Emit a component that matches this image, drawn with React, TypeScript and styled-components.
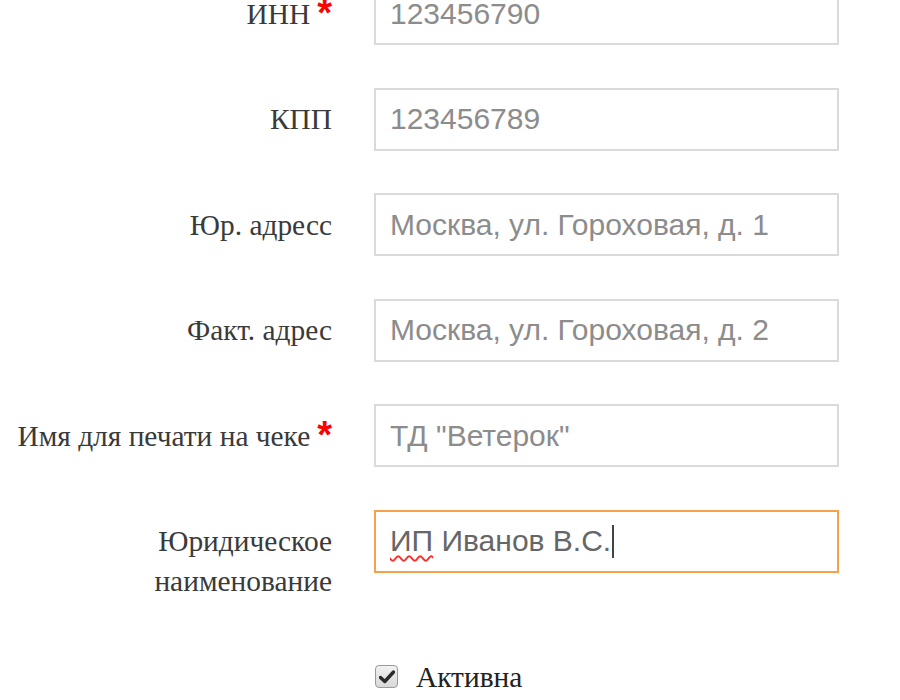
import React from "react";
import styled, { createGlobalStyle } from "styled-components";

type Row = {
    label: string;
    value: string;
    required?: boolean;
};

const rows: Row[] = [
    { label: "ИНН", value: "123456790", required: true },
    { label: "КПП", value: "123456789" },
    { label: "Юр. адресс", value: "Москва, ул. Гороховая, д. 1" },
    { label: "Факт. адрес", value: "Москва, ул. Гороховая, д. 2" },
    { label: "Имя для печати на чеке", value: "ТД \"Ветерок\"", required: true },
];

function App() {
    return (
        <>
            <GlobalStyle />
            <Form>
                {rows.map((row) => (
                    <FormRow key={row.label}>
                        <Label>
                            {row.label}
                            {row.required && <Required>*</Required>}
                        </Label>
                        <Field>
                            <FieldText>{row.value}</FieldText>
                        </Field>
                    </FormRow>
                ))}
                <FormRow>
                    <Label>
                        Юридическое
                        <br />
                        наименование
                    </Label>
                    <Field $focused>
                        <FieldText $filled>
                            <Misspelled>ИП</Misspelled> Иванов В.С.
                        </FieldText>
                        <Caret />
                    </Field>
                </FormRow>
                <CheckRow>
                    <CheckBox>
                        <svg width="16" height="14" viewBox="0 0 16 14">
                            <path d="M1.5 7.5 L5.8 11.5 L14.5 2" fill="none" stroke="#2b2b2b" strokeWidth="3.4" strokeLinecap="round" strokeLinejoin="round" />
                        </svg>
                    </CheckBox>
                    <CheckLabel>Активна</CheckLabel>
                </CheckRow>
            </Form>
        </>
    );
}

const GlobalStyle = createGlobalStyle`
    html, body {
        margin: 0;
        padding: 0;
        background: #ffffff;
        overflow: hidden;
    }
`;

const Form = styled.div`
    display: flex;
    flex-direction: column;
    gap: 42.5px;
    margin-top: -18px;
`;

const FormRow = styled.div`
    display: grid;
    grid-template-columns: 332px 465px;
    column-gap: 42px;
    align-items: start;
`;

const Label = styled.div`
    padding-top: 11.5px;
    text-align: right;
    font-family: "Liberation Serif", "Times New Roman", serif;
    font-size: 29.4px;
    line-height: 40px;
    color: #3a3a3a;
    white-space: nowrap;
`;

const Required = styled.span`
    margin-left: 7px;
    font-family: "Liberation Sans", Arial, sans-serif;
    font-weight: bold;
    font-size: 38px;
    line-height: 0;
    color: #ff0000;
    position: relative;
    top: 2px;
`;

const Field = styled.div<{ $focused?: boolean }>`
    box-sizing: border-box;
    display: flex;
    align-items: center;
    height: 63px;
    padding: 0 14px;
    border: 2px solid ${(p) => (p.$focused ? "#f7a14c" : "#dadada")};
    background: #ffffff;
`;

const FieldText = styled.span<{ $filled?: boolean }>`
    font-family: "Liberation Sans", Arial, sans-serif;
    font-size: 30px;
    color: ${(p) => (p.$filled ? "#666666" : "#8c8c8c")};
    white-space: nowrap;
`;

const Misspelled = styled.span`
    text-decoration: underline wavy #ff2a2a;
    text-decoration-thickness: 1.5px;
    text-underline-offset: 4px;
`;

const Caret = styled.span`
    width: 1.5px;
    height: 33px;
    margin-left: 1px;
    background: #444444;
`;

const CheckRow = styled.div`
    display: flex;
    align-items: center;
    gap: 18px;
    margin-left: 375px;
    margin-top: 13px;
`;

const CheckBox = styled.span`
    box-sizing: border-box;
    display: flex;
    align-items: center;
    justify-content: center;
    width: 23px;
    height: 23px;
    border: 1.5px solid #9a9a9a;
    border-radius: 4px;
    background: linear-gradient(#f2f2f2, #d8d8d8);
`;

const CheckLabel = styled.span`
    font-family: "Liberation Serif", "Times New Roman", serif;
    font-size: 29.4px;
    line-height: 40px;
    color: #222222;
`;

export default App;
